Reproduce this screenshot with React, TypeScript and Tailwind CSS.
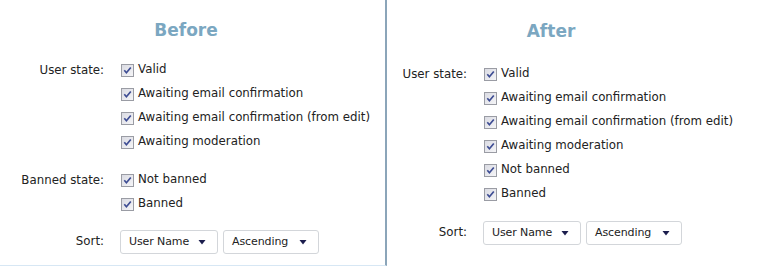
import React from 'react';

type Group = string[];

type PanelProps = {
  title: string;
  titleBox: string;
  titleTop: string;
  labelCol: string;
  groups: { label: string; items: Group }[];
  groupGap: string;
  sortTop: string;
  className?: string;
};

const CheckBox: React.FC = () => (
  <svg width="13" height="13" viewBox="0 0 13 13" className="shrink-0">
    <defs>
      <linearGradient id="cbfill" x1="0" y1="0" x2="1" y2="1">
        <stop offset="0" stopColor="#d9dae2" />
        <stop offset="1" stopColor="#f6f6f8" />
      </linearGradient>
    </defs>
    <rect x="0.5" y="0.5" width="12" height="12" fill="url(#cbfill)" stroke="#9a9ca4" />
    <path d="M3.3 6.3 L5.4 8.7 L9.8 3.5" fill="none" stroke="#3d4c93" strokeWidth="1.7" />
  </svg>
);

const SelectBox: React.FC<{ text: string; width: string }> = ({ text, width }) => (
  <div
    className={`${width} h-[24px] flex items-center justify-between pl-[8px] pr-[11px] bg-white border border-[#d3d6da] rounded-[3px] text-[11px] tracking-[-0.1px] text-[#222]`}
  >
    <span>{text}</span>
    <svg width="8" height="5" viewBox="0 0 8 5" className="shrink-0">
      <path d="M0.5 0 H7.5 L4 4.5 Z" fill="#1b1d4d" />
    </svg>
  </div>
);

const Panel: React.FC<PanelProps> = ({
  title,
  titleBox,
  titleTop,
  labelCol,
  groups,
  groupGap,
  sortTop,
  className,
}) => (
  <div className={`flex flex-col ${className ?? ''}`}>
    <div
      className={`${titleBox} ${titleTop} text-center text-[17px] leading-[24px] font-bold text-[#7ba7c1]`}
    >
      {title}
    </div>
    <div className={`flex flex-col ${groupGap}`}>
      {groups.map((g) => (
        <div key={g.label} className="flex">
          <div className={`${labelCol} shrink-0 text-right leading-[24px] text-[#222]`}>
            {g.label}
          </div>
          <div className="flex flex-col pl-[17px]">
            {g.items.map((it) => (
              <div key={it} className="flex items-center gap-[4px] h-[24px] text-[#222]">
                <CheckBox />
                <span>{it}</span>
              </div>
            ))}
          </div>
        </div>
      ))}
    </div>
    <div className={`flex items-center ${sortTop}`}>
      <div className={`${labelCol} shrink-0 text-right text-[#222]`}>Sort:</div>
      <div className="flex gap-[5px] pl-[16px]">
        <SelectBox text="User Name" width="w-[98px]" />
        <SelectBox text="Ascending" width="w-[96px]" />
      </div>
    </div>
  </div>
);

const userStates = [
  'Valid',
  'Awaiting email confirmation',
  'Awaiting email confirmation (from edit)',
  'Awaiting moderation',
];

export default function App() {
  return (
    <div
      className="flex w-[774px] h-[267px] bg-white text-[11.8px] overflow-hidden"
      style={{ fontFamily: '"DejaVu Sans", sans-serif' }}
    >
      <Panel
        className="w-[387px] h-[266px] border-r-2 border-b border-r-[#8ba5b9] border-b-[#d7e7f4]"
        title="Before"
        titleBox="w-[372px]"
        titleTop="mt-[18px] mb-[16px]"
        labelCol="w-[104px]"
        groupGap="gap-[14px]"
        sortTop="mt-[14px]"
        groups={[
          { label: 'User state:', items: userStates },
          { label: 'Banned state:', items: ['Not banned', 'Banned'] },
        ]}
      />
      <Panel
        className="flex-1"
        title="After"
        titleBox="w-[328px]"
        titleTop="mt-[19px] mb-[19px]"
        labelCol="w-[80px]"
        groupGap="gap-0"
        sortTop="mt-[15px]"
        groups={[
          {
            label: 'User state:',
            items: [...userStates, 'Not banned', 'Banned'],
          },
        ]}
      />
    </div>
  );
}
